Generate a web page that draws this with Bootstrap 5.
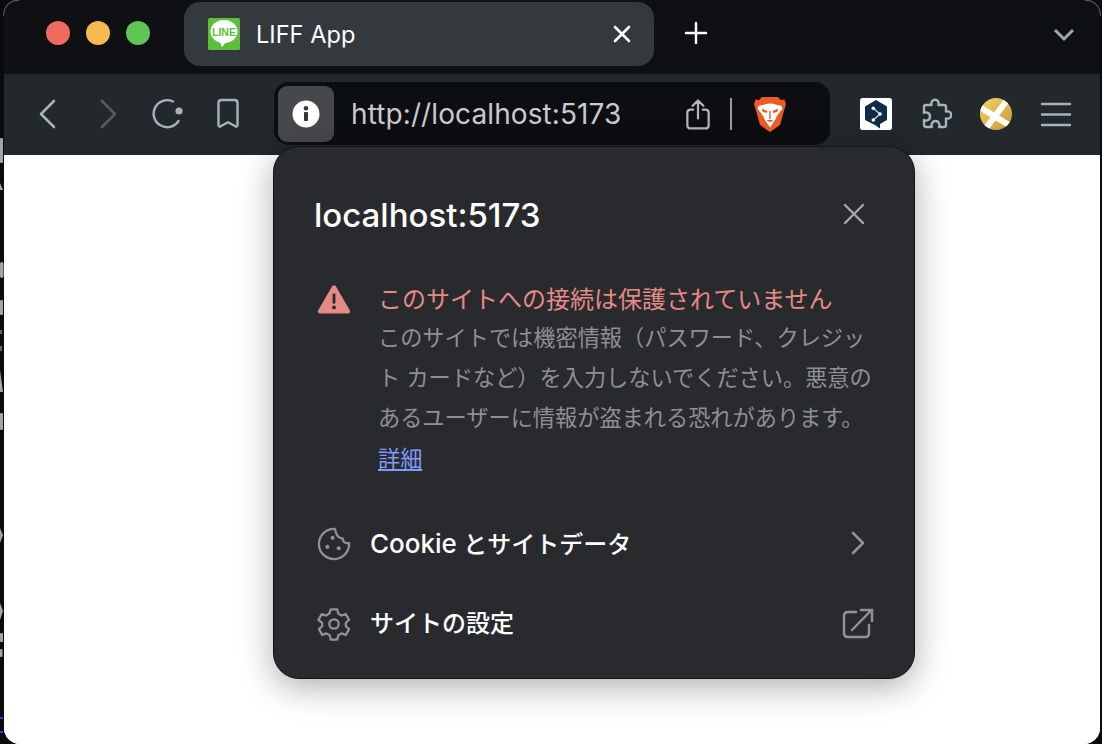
<!DOCTYPE html>
<html lang="ja">
<head>
<meta charset="utf-8">
<title>LIFF App</title>
<link href="https://cdn.jsdelivr.net/npm/bootstrap@5.3.0/dist/css/bootstrap.min.css" rel="stylesheet">
<style>
html,body{height:744px;overflow:hidden}
body{background:#0b0b0c;font-family:Inter,"Noto Sans CJK JP",sans-serif}
.desk-edge{width:4px;flex:none}
.desk-edge svg{display:block}
.browser-win{width:1096px;height:744px;border-radius:14px 14px 16px 16px;overflow:hidden;background:#fff}
.win-corner{top:0;width:16px;height:16px;border-top:1px solid #55585a}
.win-corner-l{left:3px;border-left:1px solid #55585a;border-top-left-radius:15px}
.win-corner-r{left:1085px;border-right:1px solid #55585a;border-top-right-radius:15px}
.tab-strip{height:74px;background:#0e1014;flex:none}
.traffic{width:160px;padding-left:42px;padding-bottom:8px;gap:16px}
.light{width:24px;height:24px;border-radius:50%}
.l-red{background:#ef6a5f}.l-yel{background:#f5bb4f}.l-grn{background:#5fc355}
.tab-item{width:470px;height:64px;margin:0 0 8px 20px;padding:0 20px 0 24px;background:#33393c;border-radius:16px;color:#fff;font-size:23.6px;align-self:flex-end}
.tab-title{margin-left:16px;line-height:1;padding-top:1px}
.tab-strip svg,.tool-bar svg{display:block;flex:none}
.plus-slot{width:84px;padding-bottom:8px}
.tab-menu{width:72px;padding-bottom:5px}
.tool-bar{height:81px;background:#22282b;padding-left:14px;padding-bottom:1px;flex:none}
.tool-btn{width:60px;height:60px}
.addr-bar{width:556px;height:63px;margin:0 16px 1px;padding:1px 4px 0;background:#0c0e11;border-radius:15px}
.info-chip{width:56px;height:56px;background:#47484c;border-radius:9px}
.addr-url{margin-left:17px;font-size:28px;color:#c9cacb;flex:1;line-height:1;letter-spacing:.1px}
.addr-end{padding-right:40px;gap:20px}
.addr-sep{width:2px;height:32px;background:#9a9ea1;margin:0 2px 0 -1px}
.page-area{flex:1;background:#fff}
.site-pop{left:273px;top:146px;width:642px;height:533px;background:#292a2e;border:1px solid #121316;border-radius:26px;box-shadow:0 8px 34px rgba(0,0,0,.32);color:#fff;padding:0 40px}
.pop-head{height:102px;padding-top:34px}
.pop-host{font-size:33px;font-weight:500;line-height:1}
.pop-close{margin-right:9px;margin-bottom:2px}
.warn-row{margin-top:33px;gap:24px}
.warn-mark{width:40px;flex:none;padding-top:2px;padding-left:3px}
.warn-title{font-size:24px;line-height:36px;color:#e58a84}
.warn-body{font-size:22.2px;line-height:40.2px;color:#8e9094;white-space:nowrap}
.warn-body a{color:#7f9bf7}
.pop-row{height:80px;font-size:24px;font-weight:500;line-height:1}
.pop-rows{margin-top:25px}
.row-ico{width:56px;flex:none;padding-left:3px}
.latin-big{font-size:26px}
.chev-end{margin-right:9px;margin-bottom:2px}
.ext-end{margin-bottom:2px}
</style>
</head>
<body class="d-flex position-relative m-0">
<div class="desk-edge">
<svg width="4" height="744" viewBox="0 0 4 744"><g fill="#a4a4a4"><rect y="138" width="3" height="25" rx="1"/><path d="M0 183l3 7H0z"/><rect y="262" width="3.500" height="16" rx="2"/><rect y="300" width="3" height="15" rx="1"/><rect y="330" width="2" height="4" fill="#666"/><rect y="346" width="2" height="5" fill="#666"/><path d="M0 370l3 22H0z"/><rect y="413" width="3" height="17" rx="1"/><path d="M0 528l3 7-3 8z"/><path d="M0 603l3 8-3 9z"/><rect y="633" width="3" height="9" rx="1"/><rect y="649" width="2.500" height="8" rx="1"/></g><rect y="717" width="3" height="2" fill="#4a35c8"/><rect y="731" width="3" height="2" fill="#4a35c8"/></svg>
</div>
<div class="browser-win d-flex flex-column">
  <div class="tab-strip d-flex align-items-center">
    <div class="traffic d-flex align-items-center flex-none">
      <span class="light l-red"></span><span class="light l-yel"></span><span class="light l-grn"></span>
    </div>
    <div class="tab-item d-flex align-items-center">
      <svg width="32" height="32" viewBox="0 0 32 32"><rect width="32" height="32" rx="1.500" fill="#5cbf3a"/><ellipse cx="16" cy="13.500" rx="13.500" ry="11.500" fill="#fff"/><path d="M12 24h6l-3.500 4.500c-.6.5-1 .2-1-.5z" fill="#fff"/><text x="16" y="17.500" text-anchor="middle" font-family="Liberation Sans,sans-serif" font-weight="700" font-size="10.500" fill="#5cbf3a">LINE</text></svg>
      <span class="tab-title flex-grow-1">LIFF App</span>
      <svg width="24" height="24" viewBox="0 0 24 24"><path d="M5 5l14 14M19 5L5 19" stroke="#fff" stroke-width="2.600" stroke-linecap="round"/></svg>
    </div>
    <div class="plus-slot d-flex justify-content-center">
      <svg width="24" height="24" viewBox="0 0 24 24"><path d="M12 2v20M2 12h20" stroke="#fff" stroke-width="2.400" stroke-linecap="round"/></svg>
    </div>
    <div class="ms-auto tab-menu d-flex justify-content-center">
      <svg width="24" height="16" viewBox="0 0 24 16"><path d="M3 3l9 9 9-9" fill="none" stroke="#9aa8af" stroke-width="3"/></svg>
    </div>
  </div>
  <div class="tool-bar d-flex align-items-center">
    <div class="tool-btn d-flex align-items-center justify-content-center"><svg width="20" height="32" viewBox="0 0 20 32"><path d="M16 3L3 16l13 13" fill="none" stroke="#a5b3ba" stroke-width="2.600" stroke-linecap="round" stroke-linejoin="round"/></svg></div>
    <div class="tool-btn d-flex align-items-center justify-content-center"><svg width="20" height="32" viewBox="0 0 20 32"><path d="M4 3l13 13L4 29" fill="none" stroke="#555b5f" stroke-width="2.600" stroke-linecap="round" stroke-linejoin="round"/></svg></div>
    <div class="tool-btn d-flex align-items-center justify-content-center"><svg width="34" height="32" viewBox="0 0 34 32"><path d="M22 3.500A13.500 13.500 0 1 0 27.500 23" fill="none" stroke="#a5b3ba" stroke-width="2.400" stroke-linecap="round"/><circle cx="28" cy="13" r="3.600" fill="#a5b3ba"/></svg></div>
    <div class="tool-btn d-flex align-items-center justify-content-center"><svg width="24" height="32" viewBox="0 0 24 32"><path d="M2.500 5C2.500 3 3.800 2 5.500 2h13c1.700 0 3 1 3 3v22c0 1.500-1.200 2-2.200 1.200L12 24.300l-7.300 3.900C3.500 29 2.500 28.500 2.500 27z" fill="none" stroke="#a5b3ba" stroke-width="2.400" stroke-linejoin="round"/></svg></div>
    <div class="addr-bar d-flex align-items-center">
      <div class="info-chip d-flex align-items-center justify-content-center">
        <svg width="28" height="28" viewBox="0 0 28 28"><circle cx="14" cy="14" r="13.500" fill="#fff"/><rect x="12" y="12" width="4" height="9" rx=".8" fill="#35363a"/><circle cx="14" cy="8.300" r="2.200" fill="#35363a"/></svg>
      </div>
      <span class="addr-url">http://localhost:5173</span>
      <div class="addr-end d-flex align-items-center">
        <svg width="26" height="31" viewBox="0 0 26 32"><path d="M8 11H5.500C3 11 2 12.500 2 14v13c0 2 1.200 3.400 3.500 3.400h15c2.300 0 3.500-1.400 3.500-3.400V14c0-1.500-1-3-3.500-3H18M13 20V2M7.500 7L13 1.500 18.500 7" fill="none" stroke="#b4b6b8" stroke-width="2.300" stroke-linecap="round" stroke-linejoin="round"/></svg>
        <span class="addr-sep"></span>
        <svg width="32" height="36" viewBox="0 0 32 36"><path d="M8 1h16l3 3 3.500-.5L32 8l-1.800 6L26 29l-8 5.700-2 1.300-2-1.300L6 29 1.800 14 0 8l1.500-4.500L5 4z" fill="#ee5a24"/><path d="M5 9.500c4 0 7-2 11-2s7 2 11 2l1.500 3-6 8-.8 2.500L16 31.500 10.300 23l-.8-2.500-6-8z" fill="#fff"/><path d="M8 12.500l5.500 2.500-1 2-4-1.200zM24 12.500L18.500 15l1 2 4-1.200z" fill="#ee5a24"/><path d="M15.300 15h1.400v8h-1.400zM12.500 24h7L16 26.500z" fill="#ee5a24"/></svg>
      </div>
    </div>
    <div class="tool-btn d-flex align-items-center justify-content-center"><svg width="32" height="32" viewBox="0 0 32 32"><rect width="32" height="32" rx="2.500" fill="#fff"/><path d="M16 2l11 6.500v13.500l-7 4v4.500L15 27l-10-5V8.500z" fill="#0f2b46"/><path d="M13.300 10.300L20 16l-6.700 6" fill="none" stroke="#c9d3dc" stroke-width="1.300"/><circle cx="13.300" cy="10.300" r="1.800" fill="#fff"/><circle cx="20" cy="16" r="1.800" fill="#fff"/><circle cx="13.300" cy="22" r="1.800" fill="#fff"/></svg></div>
    <div class="tool-btn d-flex align-items-center justify-content-center"><svg width="32" height="32" viewBox="0 0 32 32"><path d="M4 9a2 2 0 0 1 2-2h5.500c-1.500-7 8.500-7 7 0H24a2 2 0 0 1 2 2v4.500c7-1.500 7 8.500 0 7V27a2 2 0 0 1-2 2h-5c1-1 .5-6-3.500-6S11 28 12 29H6a2 2 0 0 1-2-2v-5c1 1 6 1 6-3.500S5 14 4 15z" fill="none" stroke="#a5b3ba" stroke-width="2.400" stroke-linejoin="round"/></svg></div>
    <div class="tool-btn d-flex align-items-center justify-content-center"><svg width="32" height="32" viewBox="0 0 32 32"><defs><linearGradient id="goldx" x1="0" y1="0" x2="1" y2="1"><stop offset="0" stop-color="#f6d463"/><stop offset="1" stop-color="#c39a36"/></linearGradient><clipPath id="goldc"><circle cx="16" cy="16" r="16"/></clipPath></defs><circle cx="16" cy="16" r="16" fill="url(#goldx)"/><g clip-path="url(#goldc)" stroke="#fff" stroke-width="6"><path d="M-2 8l34 21"/><path d="M28 1L6 30"/></g></svg></div>
    <div class="tool-btn d-flex align-items-center justify-content-center"><svg width="32" height="26" viewBox="0 0 32 26"><path d="M2 3h28M2 13.500h28M2 24h28" stroke="#a5b3ba" stroke-width="2.400" stroke-linecap="round"/></svg></div>
  </div>
  <div class="page-area"></div>
</div>
<span class="win-corner win-corner-l position-absolute"></span>
<span class="win-corner win-corner-r position-absolute"></span>
<div class="site-pop position-absolute">
  <div class="pop-head d-flex justify-content-between align-items-center">
    <span class="pop-host">localhost:5173</span>
    <svg class="pop-close" width="22" height="22" viewBox="0 0 22 22"><path d="M2 2l18 18M20 2L2 20" stroke="#a6a8ab" stroke-width="2.400" stroke-linecap="round"/></svg>
  </div>
  <div class="warn-row d-flex">
    <div class="warn-mark"><svg class="d-block" width="34" height="30" viewBox="0 0 36 32"><path d="M18 1.500c1 0 1.800.5 2.300 1.400l14.500 25c1 1.700 0 3.600-2 3.600H3.200c-2 0-3-1.900-2-3.600l14.500-25c.5-.9 1.300-1.400 2.300-1.400z" fill="#e58a84"/><rect x="16.500" y="10" width="3" height="11" rx="1.200" fill="#292a2e"/><circle cx="18" cy="25" r="2" fill="#292a2e"/></svg></div>
    <div>
      <div class="warn-title">このサイトへの接続は保護されていません</div>
      <div class="warn-body">このサイトでは機密情報（パスワード、クレジッ<br>ト カードなど）を入力しないでください。悪意の<br>あるユーザーに情報が盗まれる恐れがあります。<br><a href="#">詳細</a></div>
    </div>
  </div>
  <div class="pop-rows">
    <div class="pop-row d-flex align-items-center">
      <div class="row-ico"><svg class="d-block" width="34" height="34" viewBox="0 0 36 36"><path d="M19 2A16 16 0 1 0 34 17c-4 1-7-2-7-5-4 0-7-4-8-10z" fill="none" stroke="#909296" stroke-width="2.400" stroke-linejoin="round"/><circle cx="16.500" cy="11.500" r="2.200" fill="#909296"/><circle cx="11" cy="21" r="2.200" fill="#909296"/><circle cx="23" cy="22.500" r="2.200" fill="#909296"/></svg></div>
      <span class="flex-grow-1"><span class="latin-big">Cookie</span> とサイトデータ</span>
      <svg class="chev-end" width="14" height="24" viewBox="0 0 14 24"><path d="M2 2l10 10L2 22" fill="none" stroke="#909296" stroke-width="2.600" stroke-linecap="round" stroke-linejoin="round"/></svg>
    </div>
    <div class="pop-row d-flex align-items-center">
      <div class="row-ico"><svg class="d-block" width="34" height="34" viewBox="0 0 36 36"><path d="M14.500 2.500h7l1 4.500 3.500 2 4.500-1.500 3.500 6-3.500 3.200v3.600l3.500 3.200-3.500 6-4.500-1.500-3.500 2-1 4.500h-7l-1-4.500-3.500-2-4.500 1.500-3.500-6 3.500-3.200v-3.600L1.500 13.500l3.500-6 4.500 1.500 3.500-2z" fill="none" stroke="#909296" stroke-width="2.400" stroke-linejoin="round"/><circle cx="18" cy="18" r="5" fill="none" stroke="#909296" stroke-width="2.400"/></svg></div>
      <span class="flex-grow-1">サイトの設定</span>
      <svg class="ext-end" width="32" height="32" viewBox="0 0 32 32"><path d="M14 5H6c-2.500 0-4 1.500-4 4v17c0 2.500 1.500 4 4 4h17c2.500 0 4-1.500 4-4v-8M10 23L29 3.500M19 3h11v11" fill="none" stroke="#909296" stroke-width="2.500" stroke-linecap="round"/></svg>
    </div>
  </div>
</div>
<script src="https://cdn.jsdelivr.net/npm/bootstrap@5.3.0/dist/js/bootstrap.bundle.min.js"></script>
</body>
</html>
